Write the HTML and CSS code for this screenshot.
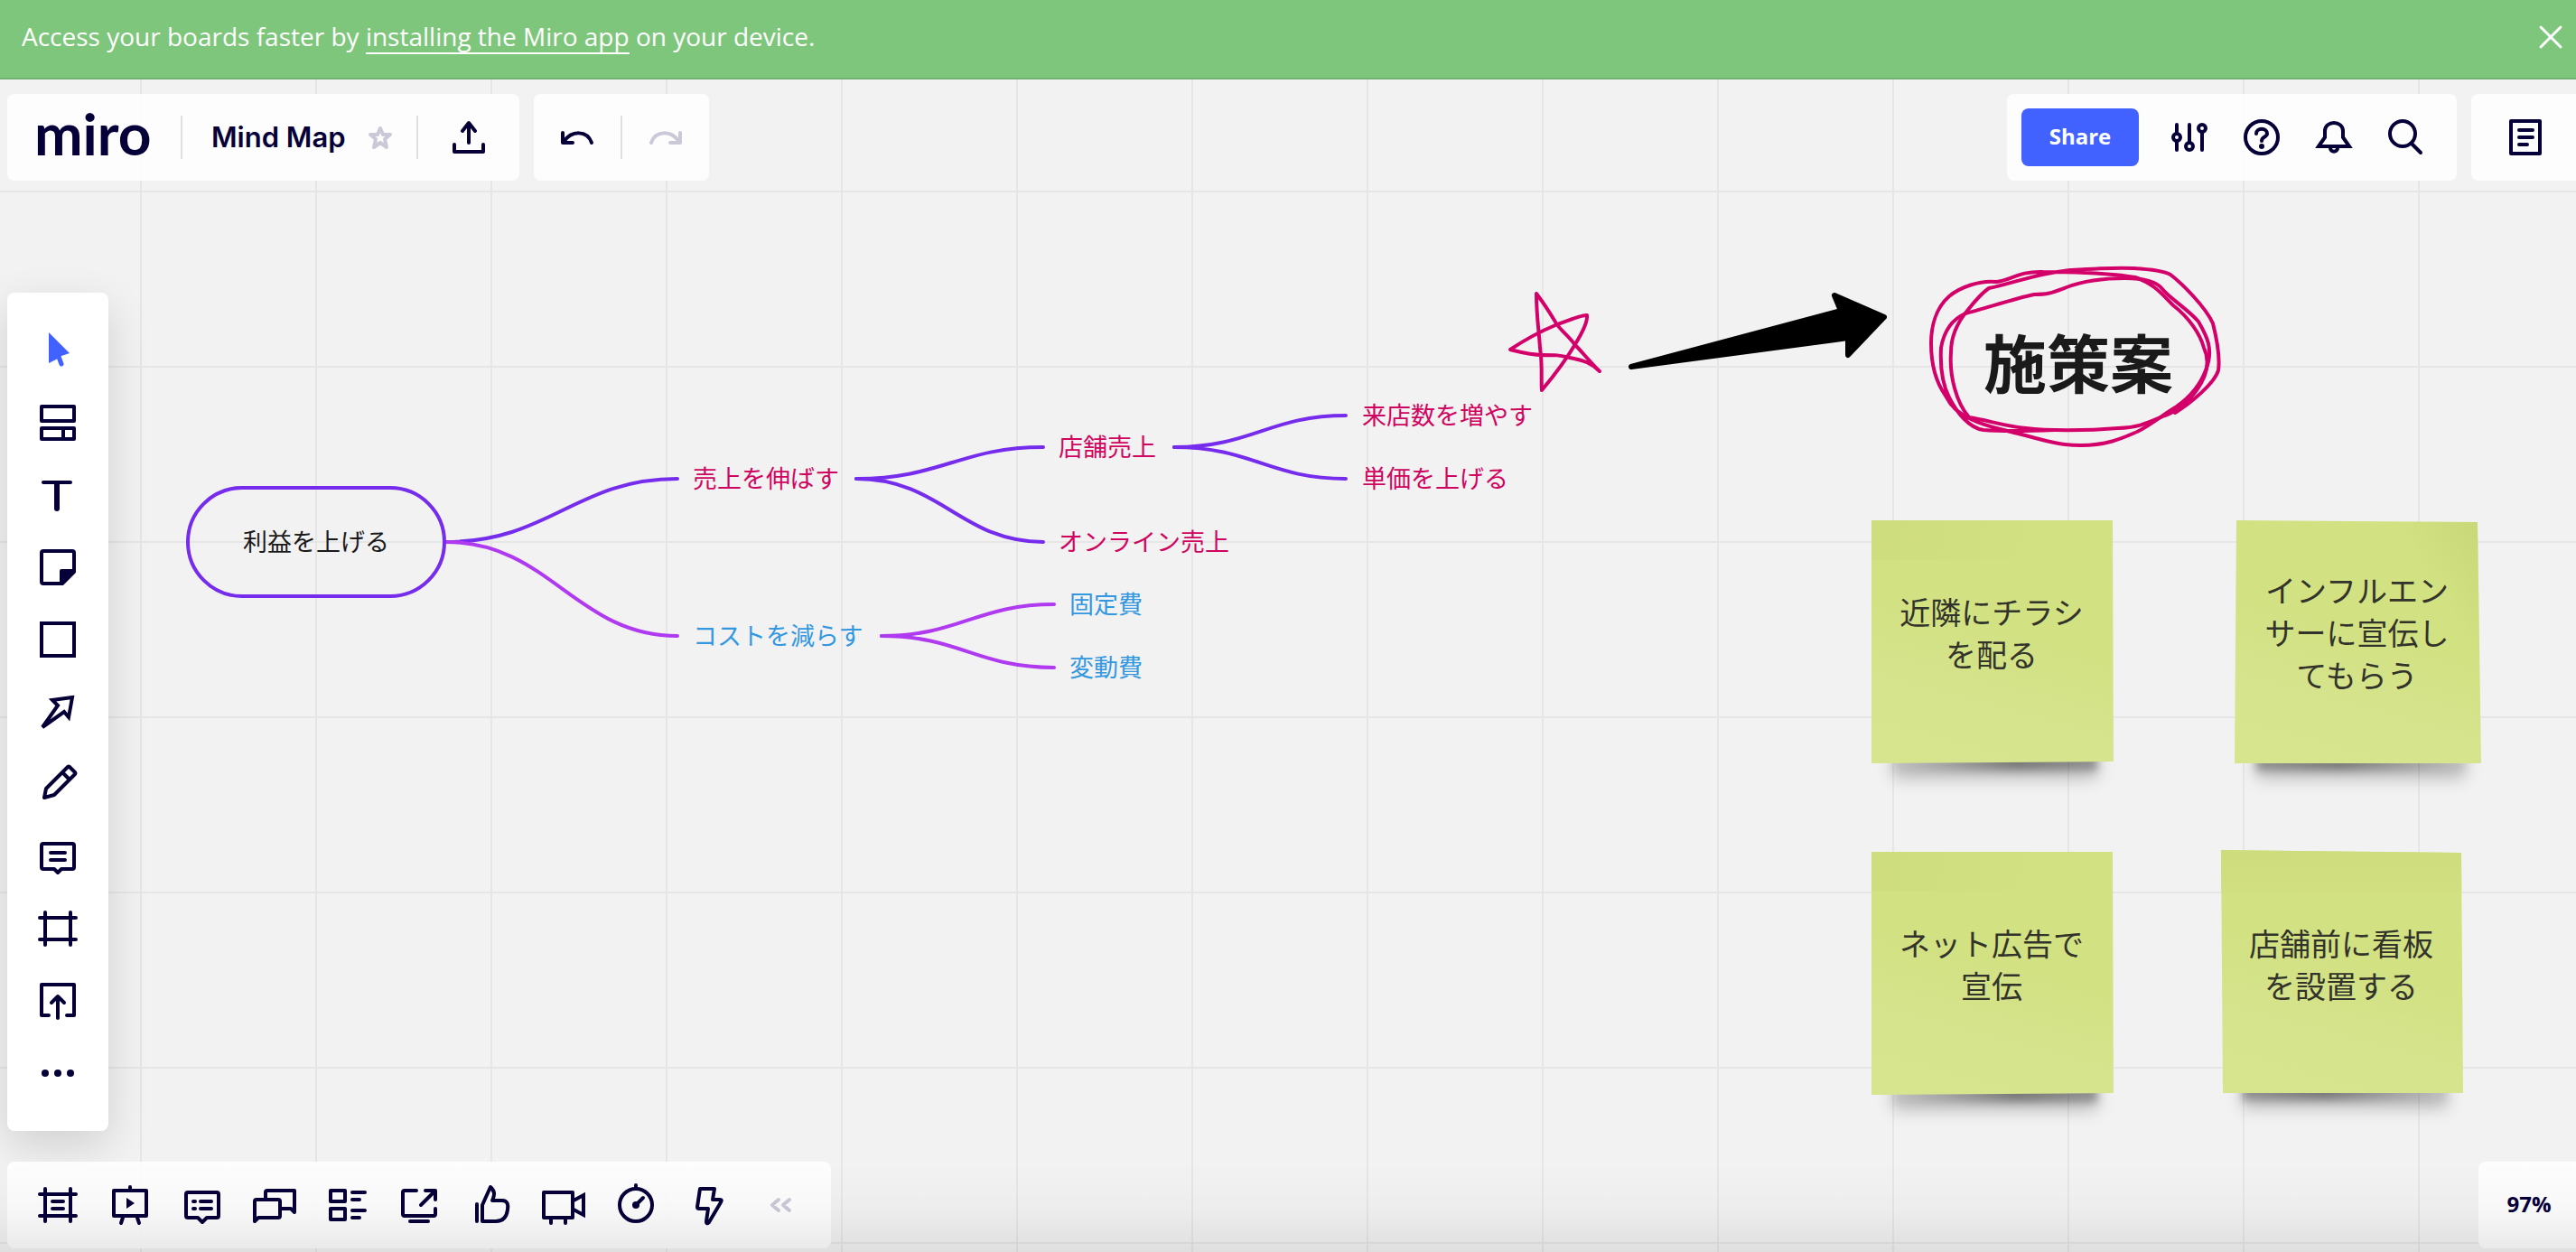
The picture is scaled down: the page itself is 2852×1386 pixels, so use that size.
FILE: index.html
```html
<!DOCTYPE html>
<html lang="ja">
<head>
    <meta charset="UTF-8">
    <meta name="viewport" content="width=device-width, initial-scale=1">
    <title>Mind Map</title>
    <link rel="stylesheet" href="styles.css">
</head>
<body>
<!-- board -->
<main class="canvas">
    <svg class="lines" aria-hidden="true">
        <g class="violet">
            <path d="M494 600C608 600 638 530 750 530"/>
            <path d="M948 530C1042 530 1064 495 1155 495"/>
            <path d="M948 530C1042 530 1064 600 1155 600"/>
            <path d="M1300 495C1386 495 1406 460 1490 460"/>
            <path d="M1300 495C1386 495 1406 530 1490 530"/>
        </g>
        <g class="purple">
            <path d="M494 600C608 600 638 704 750 704"/>
            <path d="M976 704C1062 704 1082 669 1167 669"/>
            <path d="M976 704C1062 704 1082 739 1167 739"/>
        </g>
        <g class="marker">
            <path d="M1701 325C1701 350 1704 368 1705 385C1708 405 1706 420 1707 432C1722 414 1734 398 1744 381C1752 368 1758 356 1757 349C1752 348 1738 354 1722 360C1705 367 1690 375 1672 387C1684 390 1694 393 1708 393C1722 393 1727 393 1738 396C1754 399 1762 402 1771 411C1758 398 1752 390 1744 382C1736 371 1728 366 1723 358C1714 343 1708 334 1701 325"/>
            <path d="M2210 312C2228 310 2234 300 2262 301C2300 301 2340 303 2364 307C2385 314 2394 326 2406 338C2424 352 2436 370 2440 385C2448 402 2442 418 2432 432C2420 448 2408 456 2397 460C2382 466 2368 474 2345 474C2310 477 2268 477 2243 474C2220 472 2200 465 2180 462C2166 446 2158 416 2160 390C2160 372 2168 356 2178 344C2186 334 2192 326 2202 319C2228 314 2256 302 2293 299C2324 297 2346 296 2362 297C2380 298 2396 300 2403 304C2416 314 2442 340 2450 358C2454 374 2458 396 2456 410C2452 424 2426 446 2408 457"/>
            <path d="M2210 312C2192 310 2170 318 2158 328C2142 342 2138 364 2138 380C2138 404 2144 424 2154 438C2160 450 2168 458 2182 464C2198 472 2212 474 2230 479C2260 486 2276 493 2304 493C2334 493 2352 484 2366 478C2382 470 2396 458 2410 450C2424 440 2436 426 2442 410C2452 386 2442 370 2434 356C2422 342 2402 330 2394 320C2388 312 2374 308 2353 308C2326 308 2304 312 2288 318C2272 324 2268 326 2252 326C2232 330 2196 342 2176 347C2160 354 2152 368 2149 385C2148 404 2150 424 2158 440C2166 456 2180 474 2196 476C2220 478 2250 477 2275 476"/>
        </g>
        <path class="arrow" d="M1806 406L2038 344L2031 327L2086 351L2046 393L2046 374Z"/>
    </svg>

    <div class="node root">利益を上げる</div>
    <div class="node sales">売上を伸ばす</div>
    <div class="node store">店舗売上</div>
    <div class="node online">オンライン売上</div>
    <div class="node visitors">来店数を増やす</div>
    <div class="node price">単価を上げる</div>
    <div class="node cost">コストを減らす</div>
    <div class="node fixed">固定費</div>
    <div class="node variable">変動費</div>

    <h2 class="idea">施策案</h2>
    <div class="note note1">近隣にチラシを配る</div>
    <div class="note note2">インフルエンサーに宣伝してもらう</div>
    <div class="note note3">ネット広告で宣伝</div>
    <div class="note note4">店舗前に看板を設置する</div>
</main>

<!-- banner -->
<div class="banner">
    <p>Access your boards faster by <a href="#">installing the Miro app</a> on your device.</p>
    <button type="button" class="close" aria-label="Close">
        <svg viewBox="0 0 24 24"><path d="M1 1L23 23M23 1L1 23"/></svg>
    </button>
</div>

<!-- top bar -->
<header class="top">
    <div class="panel board">
        <a href="#" class="logo">miro</a>
        <span class="divider"></span>
        <h1>Mind Map</h1>
        <button type="button" class="star" aria-label="Star">
            <svg viewBox="0 0 28 28"><path d="M14 4L17 11L25 11L19 16L21 25L14 20L7 25L9 16L3 11L11 11Z"/></svg>
        </button>
        <span class="divider"></span>
        <button type="button" class="icon export" aria-label="Export">
            <svg viewBox="0 0 48 48"><path d="M8 32V40H40V32M24 9V30M17 17L24 8L31 17"/></svg>
        </button>
    </div>
    <div class="panel history">
        <button type="button" class="icon" aria-label="Undo">
            <svg viewBox="0 0 48 48"><path d="M8 19V30H19M9 29C18 16 35 16 40 30"/></svg>
        </button>
        <span class="divider"></span>
        <button type="button" class="icon" aria-label="Redo" disabled>
            <svg viewBox="0 0 48 48"><path d="M40 19V30H29M39 29C30 16 13 16 8 30"/></svg>
        </button>
    </div>
    <div class="panel account">
        <button type="button" class="share">Share</button>
        <button type="button" class="icon" aria-label="Settings">
            <svg viewBox="0 0 48 48"><path d="M10 10V20M10 28V38M24 10V30M38 18V38"/><circle cx="10" cy="24" r="4"/><circle cx="24" cy="34" r="4"/><circle cx="38" cy="14" r="4"/></svg>
        </button>
        <button type="button" class="icon" aria-label="Help">
            <svg viewBox="0 0 48 48"><circle cx="24" cy="24" r="18"/><path d="M18 20C18 13 30 13 30 20C30 24 24 23 24 28"/><circle class="dot" cx="24" cy="34" r="3"/></svg>
        </button>
        <button type="button" class="icon" aria-label="Notifications">
            <svg viewBox="0 0 48 48"><path class="miter" d="M7 34L14 24V17C14 5 34 5 34 17V24L41 34Z"/><path d="M20 36C20 41 28 41 28 36"/></svg>
        </button>
        <button type="button" class="icon" aria-label="Search">
            <svg viewBox="0 0 48 48"><circle cx="20" cy="20" r="14"/><path d="M30 31L40 41"/></svg>
        </button>
    </div>
    <div class="panel side">
        <button type="button" class="icon" aria-label="Notes">
            <svg viewBox="0 0 48 48"><path d="M8 6H40V42H8ZM17 16H32M17 24H32M17 32H26"/></svg>
        </button>
    </div>
</header>

<!-- left tools -->
<nav class="tools">
    <button type="button" class="icon active" aria-label="Select">
        <svg viewBox="0 0 48 48"><path class="shape" d="M14 4L37 27L28 30L24 33L14 38Z"/><path d="M25 31L28 39"/></svg>
    </button>
    <button type="button" class="icon" aria-label="Templates">
        <svg viewBox="0 0 48 48"><path d="M6 6H42V22H6ZM6 30H42V42H6ZM30 30V42"/></svg>
    </button>
    <button type="button" class="icon" aria-label="Text">
        <svg viewBox="0 0 48 48"><path d="M8 10H38"/><path class="thick" d="M23 11V39"/></svg>
    </button>
    <button type="button" class="icon" aria-label="Sticky note">
        <svg viewBox="0 0 48 48"><path d="M8 6H40A2 2 0 0 1 42 8V29L29 42H8A2 2 0 0 1 6 40V8A2 2 0 0 1 8 6Z"/><path class="fill" d="M28 28H41L28 41Z"/></svg>
    </button>
    <button type="button" class="icon sharp" aria-label="Shape">
        <svg viewBox="0 0 48 48"><path d="M6 6H42V42H6Z"/></svg>
    </button>
    <button type="button" class="icon" aria-label="Arrow">
        <svg viewBox="0 0 48 48"><path class="miter" d="M40 8L18 11L24 17L7 41L31 24L36 30Z"/></svg>
    </button>
    <button type="button" class="icon" aria-label="Pen">
        <svg viewBox="0 0 48 48"><path d="M9 39L11 29L35 5Q36 4 37 5L43 11Q44 12 43 13L20 36ZM29 11L37 19"/></svg>
    </button>
    <button type="button" class="icon" aria-label="Comment">
        <svg viewBox="0 0 48 48"><path d="M8 10H40A2 2 0 0 1 42 12V36A2 2 0 0 1 40 38H28L24 42L20 38H8A2 2 0 0 1 6 36V12A2 2 0 0 1 8 10ZM16 20H32M16 28H32"/></svg>
    </button>
    <button type="button" class="icon" aria-label="Frame">
        <svg viewBox="0 0 48 48"><path d="M10 6V42M38 6V42M4 12H44M4 36H44"/></svg>
    </button>
    <button type="button" class="icon" aria-label="Upload">
        <svg viewBox="0 0 48 48"><path d="M14 40H6V6H42V40H34M24 43V19M17 26L24 19L31 26"/></svg>
    </button>
    <button type="button" class="icon" aria-label="More">
        <svg viewBox="0 0 48 48"><circle class="dot" cx="10" cy="24" r="4"/><circle class="dot" cx="24" cy="24" r="4"/><circle class="dot" cx="38" cy="24" r="4"/></svg>
    </button>
</nav>

<!-- bottom bar -->
<footer class="bottom">
    <div class="panel actions">
        <button type="button" class="icon" aria-label="Frames">
            <svg viewBox="0 0 48 48"><path d="M10 6V42M38 6V42M4 12H44M4 36H44M18 20H30M18 28H30"/></svg>
        </button>
        <button type="button" class="icon" aria-label="Presentation">
            <svg viewBox="0 0 48 48"><path d="M6 8H42V36H6ZM24 4V8M16 38L14 44M32 38L34 44"/><path class="shape" d="M20 16L29 22L20 28Z"/></svg>
        </button>
        <button type="button" class="icon" aria-label="Comments">
            <svg viewBox="0 0 48 48"><path d="M8 10H40A2 2 0 0 1 42 12V36A2 2 0 0 1 40 38H29L24 43L19 38H8A2 2 0 0 1 6 36V12A2 2 0 0 1 8 10ZM14 20H16M22 20H34M14 28H16M22 28H34"/></svg>
        </button>
        <button type="button" class="icon" aria-label="Chat">
            <svg viewBox="0 0 48 48"><path d="M14 18V10A2 2 0 0 1 16 8H46V32L42 28H31"/><path d="M2 42V20A2 2 0 0 1 4 18H28A2 2 0 0 1 30 20V36A2 2 0 0 1 28 38H6Z"/></svg>
        </button>
        <button type="button" class="icon" aria-label="Cards">
            <svg viewBox="0 0 48 48"><path d="M6 8H22V20H6ZM6 28H22V40H6ZM30 10H44M30 18H38M30 30H44M30 38H38"/></svg>
        </button>
        <button type="button" class="icon" aria-label="Screen sharing">
            <svg viewBox="0 0 48 48"><path d="M21 8H8A2 2 0 0 0 6 10V34A2 2 0 0 0 8 36H40A2 2 0 0 0 42 34V28M26 24L41 9M31 8H42V18M14 42H34"/></svg>
        </button>
        <button type="button" class="icon" aria-label="Voting">
            <svg viewBox="0 0 48 48"><path d="M8 23V42M14 42V24L23 4C28 9 28 12 25 19H36C42 19 43 24 42 29C41 37 37 42 29 42Z"/></svg>
        </button>
        <button type="button" class="icon" aria-label="Video chat">
            <svg viewBox="0 0 48 48"><path d="M2 10H34V38H2ZM10 38V44M26 38V44"/><path class="miter" d="M35 19L46 13V35L35 29"/></svg>
        </button>
        <button type="button" class="icon" aria-label="Timer">
            <svg viewBox="0 0 48 48"><circle cx="24" cy="24" r="18"/><path d="M24 2V6M24 24L32 16"/><circle class="dot" cx="24" cy="24" r="4"/></svg>
        </button>
        <button type="button" class="icon" aria-label="Apps">
            <svg viewBox="0 0 48 48"><path d="M15 6H31L29 18H37Q40 18 38 21L25 43Q22 46 22 42L24 28H14Q12 28 12 26Z"/></svg>
        </button>
        <button type="button" class="icon collapse" aria-label="Collapse">
            <svg viewBox="0 0 48 48"><path d="M22 18L15 24L22 30M34 18L27 24L34 30"/></svg>
        </button>
    </div>
    <button type="button" class="panel zoom">97%</button>
</footer>
</body>
</html>
```
FILE: styles.css
```css
* {
    box-sizing: border-box;
}

body, h1, h2, p {
    margin: 0;
}

body {
    position: relative;
    display: flex;
    flex-direction: column;
    min-height: 100vh;
    overflow-x: hidden;
    background: #f2f2f2;
    color: #050038;
    font-family: "Open Sans", "Noto Sans CJK JP", sans-serif;
}

button {
    padding: 0;
    border: none;
    background: none;
    color: inherit;
    font-family: inherit;
    cursor: pointer;
}

/* bottom fade */
body::after {
    content: "";
    position: absolute;
    left: 0;
    right: 0;
    bottom: 0;
    height: 100px;
    background: linear-gradient(rgba(0, 0, 0, 0), rgba(0, 0, 0, .02) 50%, rgba(0, 0, 0, .08));
    pointer-events: none;
}

/* banner */
.banner {
    position: relative;
    display: flex;
    justify-content: space-between;
    align-items: center;
    height: 88px;
    padding: 0 16px 4px 24px;
    border-bottom: 2px solid #74b073;
    background: #7fc67d;
    color: #fff;
    font-size: 28px;
    line-height: 36px;
}

.banner a {
    display: inline-block;
    border-bottom: 2px solid #fff;
    color: #fff;
    text-decoration: none;
}

.close svg {
    display: block;
    width: 24px;
    height: 24px;
    overflow: visible;
    fill: none;
    stroke: #fff;
    stroke-width: 3;
    stroke-linecap: round;
}

/* panels */
.top, .bottom {
    position: relative;
    display: flex;
    gap: 16px;
    padding-left: 8px;
}

.top {
    margin-top: 16px;
}

.bottom {
    justify-content: space-between;
    margin-bottom: 4px;
}

.panel {
    display: flex;
    align-items: center;
    height: 96px;
    border-radius: 8px;
    background: rgba(255, 255, 255, .85);
}

.divider {
    width: 2px;
    height: 48px;
    background: #dfdee6;
}

.icon {
    display: flex;
    justify-content: center;
    align-items: center;
    width: 80px;
    height: 80px;
}

.icon svg {
    width: 48px;
    height: 48px;
    overflow: visible;
    fill: none;
    stroke: #050038;
    stroke-width: 4;
    stroke-linecap: round;
    stroke-linejoin: round;
}

.icon .dot, .icon .shape {
    fill: #050038;
    stroke: none;
}

.icon .fill {
    fill: #050038;
}

.icon .thick {
    stroke-width: 6;
}

.icon .miter, .sharp svg {
    stroke-linejoin: miter;
}

.icon:disabled svg, .collapse svg {
    stroke: #cbc9d7;
}

.logo {
    width: 128px;
    margin: 0 34px 0 30px;
    padding-bottom: 8px;
    color: #050038;
    font: bold 64px/80px Lato, sans-serif;
    text-decoration: none;
}

.board h1 {
    margin-left: 32px;
    font: 600 31px/48px Inter, sans-serif;
}

.star {
    margin: 0 26px 0 24px;
}

.star svg {
    display: block;
    width: 28px;
    height: 28px;
    fill: none;
    stroke: #cbc9d7;
    stroke-width: 4;
    stroke-linejoin: round;
}

.export {
    width: 112px;
}

.history .icon {
    width: 96px;
}

.account {
    margin-left: auto;
    padding: 0 16px;
}

.share {
    width: 130px;
    height: 64px;
    margin-right: 16px;
    padding-bottom: 4px;
    border-radius: 8px;
    background: #4262ff;
    color: #fff;
    font-size: 24px;
    font-weight: bold;
}

.side {
    width: 116px;
    padding-left: 20px;
    border-radius: 8px 0 0 8px;
}

/* left tools */
.tools {
    position: relative;
    width: 112px;
    margin: auto 0 34px 8px;
    padding: 24px 16px;
    border-radius: 8px;
    background: #fff;
    box-shadow: 0 16px 48px rgba(0, 0, 0, .14);
}

.active svg {
    stroke: #4262ff;
    stroke-width: 5;
}

.icon.active .shape {
    fill: #4262ff;
}

.actions {
    padding: 0 16px;
}

.zoom {
    justify-content: center;
    width: 108px;
    padding: 0 0 4px 4px;
    border-radius: 8px 0 0 8px;
    font-size: 24px;
    font-weight: bold;
}

/* board */
.canvas {
    position: absolute;
    top: 0;
    right: 0;
    bottom: 0;
    left: 0;
    overflow: hidden;
    background: linear-gradient(90deg, #e6e6e6 2px, transparent 2px) 155px 0 / 194px 194px,
        linear-gradient(#e6e6e6 2px, transparent 2px) 0 17px / 194px 194px;
}

.lines {
    position: absolute;
    top: 0;
    left: 0;
    width: 100%;
    height: 100%;
    fill: none;
    stroke-width: 4;
    stroke-linecap: round;
    stroke-linejoin: round;
}

.violet {
    stroke: #762cec;
}

.purple {
    stroke: #b03af0;
}

.marker {
    stroke: #d4006a;
}

.arrow {
    fill: #000;
    stroke: #000;
    stroke-width: 6;
}

.node {
    position: absolute;
    color: #cf0560;
    font: 27px/38px "Noto Sans CJK JP", sans-serif;
    white-space: nowrap;
}

.root {
    left: 206px;
    top: 538px;
    width: 288px;
    height: 124px;
    border: 4px solid #762cec;
    border-radius: 62px;
    color: #1a1a1a;
    line-height: 114px;
    text-align: center;
}

.sales {
    left: 767px;
    top: 510px;
}

.store {
    left: 1172px;
    top: 475px;
}

.online {
    left: 1172px;
    top: 580px;
}

.visitors {
    left: 1508px;
    top: 440px;
}

.price {
    left: 1508px;
    top: 510px;
}

.cost, .fixed, .variable {
    color: #3498e0;
}

.cost {
    left: 767px;
    top: 684px;
}

.fixed {
    left: 1184px;
    top: 649px;
}

.variable {
    left: 1184px;
    top: 719px;
}

.idea {
    position: absolute;
    left: 2196px;
    top: 350px;
    color: #1a1a1a;
    font: bold 70px/100px "Noto Sans CJK JP", sans-serif;
}

/* sticky notes */
.note {
    position: absolute;
    display: flex;
    align-items: center;
    width: 268px;
    height: 269px;
    padding: 0 32px 22px 30px;
    color: #32332a;
    font: 34px/47px "Noto Sans CJK JP", sans-serif;
    text-align: center;
    isolation: isolate;
}

/* the lifted bottom edge throws a wide soft shadow and a short dark one */
.note::before {
    content: "";
    position: absolute;
    z-index: -2;
    left: 24px;
    right: 18px;
    bottom: -8px;
    height: 24px;
    background: linear-gradient(90deg, rgba(0, 0, 0, .2), rgba(0, 0, 0, .5) 60%, rgba(0, 0, 0, .4));
    box-shadow: 0 8px 16px rgba(0, 0, 0, .25);
    filter: blur(5px);
}

.note::after {
    content: "";
    position: absolute;
    z-index: -1;
    top: 0;
    right: 0;
    bottom: 0;
    left: 0;
    background: linear-gradient(100deg, rgba(200, 214, 120, .4), rgba(200, 214, 120, 0) 70%) 0 0 / 100% 44px no-repeat,
        linear-gradient(195deg, #d2e182 45%, #d6e48e 75%, #d7e58f);
    clip-path: polygon(0 0, 267px 0, 100% 267px, 0 100%);
}

.note1 {
    left: 2072px;
    top: 576px;
}

.note2 {
    left: 2474px;
    top: 576px;
    width: 273px;
}

.note2::before, .note4::before {
    transform: scaleX(-1);
}

.note2::after {
    background: linear-gradient(240deg, rgba(190, 205, 110, .5), rgba(190, 205, 110, 0) 22%),
        linear-gradient(195deg, #d2e182 45%, #d6e48e 75%, #d7e58f);
    clip-path: polygon(2px 0, 269px 2px, 100% 100%, 0 100%);
}

.note3 {
    left: 2072px;
    top: 943px;
}

.note4 {
    left: 2459px;
    top: 941px;
    padding-bottom: 18px;
}

.note4::after {
    background: linear-gradient(#cfdc7e, #d1df81 44px, transparent 50px),
        linear-gradient(195deg, #d2e182 45%, #d6e48e 75%, #d7e58f);
    clip-path: polygon(0 0, 266px 3px, 100% 100%, 2px 100%);
}
```
